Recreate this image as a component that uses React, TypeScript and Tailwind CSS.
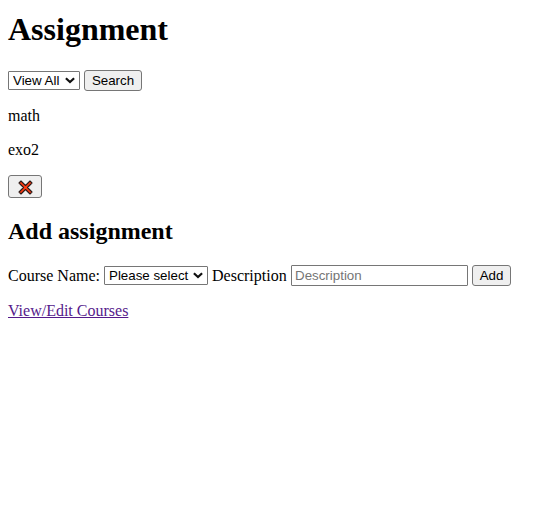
import React from "react";

const control = "font-['Liberation_Sans',Arial,sans-serif] text-[13.333px] leading-[15px] text-black";
const button = `${control} h-[21px] shrink-0 rounded-[3px] border border-[#767676] bg-[#efefef] text-center`;

function Select({ label, width }: { label: string; width: string }) {
  return (
    <div className={`relative h-[19px] shrink-0 ${width}`}>
      <select
        className={`${control} block h-[19px] w-full appearance-none rounded-[1px] border border-[#767676] bg-white pl-1`}
      >
        <option>{label}</option>
      </select>
      <svg
        className="pointer-events-none absolute top-[6px] right-[5px] h-[7px] w-[10px]"
        viewBox="0 0 10 7"
        fill="none"
        stroke="#101010"
        strokeWidth="2.2"
      >
        <path d="M0.9 1.2 L5 5 L9.1 1.2" />
      </svg>
    </div>
  );
}

export default function App() {
  return (
    <main className="h-[507px] overflow-hidden bg-white px-2 pt-[11px] font-['Liberation_Serif','Times_New_Roman',serif] text-base leading-[18px] text-black">
      <h1 className="text-[32px] leading-[37px] font-bold">Assignment</h1>
      <div className="mt-[22px] flex h-[21px] items-center gap-1">
        <Select label="View All" width="w-[72px]" />
        <button className={`${button} w-[58px]`}>Search</button>
      </div>
      <p className="mt-4">math</p>
      <p className="mt-4">exo2</p>
      <button className="mt-4 flex h-[23px] w-[34px] items-center justify-center rounded-[3px] border border-[#767676] bg-[#efefef]">
        <svg className="mt-[2px] h-[15px] w-[15px]" viewBox="0 0 15 15" fill="none">
          <path
            d="M3 1 L7.5 5.5 L12 1 L14 3 L9.5 7.5 L14 12 L12 14 L7.5 9.5 L3 14 L1 12 L5.5 7.5 L1 3 Z"
            fill="#ff3a12"
            stroke="#2b1b18"
            strokeWidth="1.1"
            strokeLinejoin="round"
          />
        </svg>
      </button>
      <h2 className="mt-5 text-2xl leading-[27px] font-bold">Add assignment</h2>
      <div className="mt-5 flex h-[21px] items-center">
        <label className="w-24 shrink-0 whitespace-nowrap">Course Name:</label>
        <Select label="Please select" width="w-[104px]" />
        <label className="ml-1 w-[79px] shrink-0">Description</label>
        <input
          placeholder="Description"
          className={`${control} h-[21px] w-[177px] shrink-0 rounded-[1px] border border-[#767676] px-[3px] placeholder:text-[#757575]`}
        />
        <button className={`${button} ml-1 w-[39px]`}>Add</button>
      </div>
      <p className="mt-4">
        <a href="#" className="text-[#551a8b] underline">
          View/Edit Courses
        </a>
      </p>
    </main>
  );
}
